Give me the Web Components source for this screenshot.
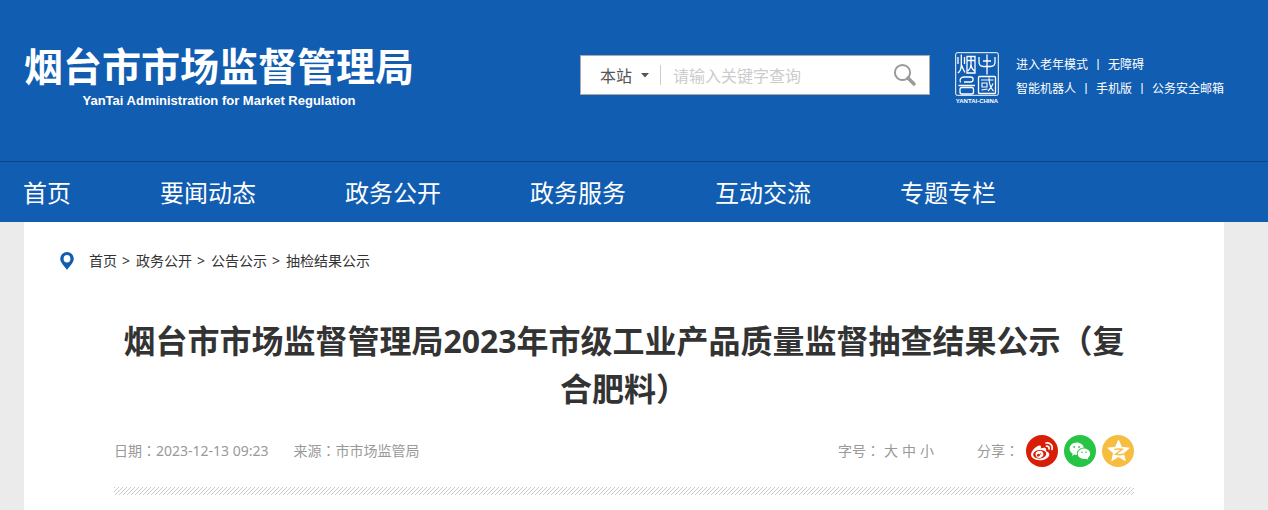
<!DOCTYPE html>
<html lang="zh-CN">
<head>
<meta charset="utf-8">
<meta name="viewport" content="width=device-width, initial-scale=1">
<title>烟台市市场监督管理局</title>
<style>
:root{--brand:#115db1;--brand-line:#0b4689;--muted:#999;--side-l:24px;--side-r:44px}
body{margin:0;background:#ebebeb;color:#333;font-family:"Noto Sans","Noto Sans CJK SC",sans-serif;font-size:14px}
.p{font-family:"Noto Sans CJK TC",sans-serif;line-height:1}
</style>
</head>
<body>
<site-header>
  <site-logo slot="logo"></site-logo>
  <site-search slot="search"></site-search>
  <city-seal slot="seal"></city-seal>
  <quick-links slot="links"></quick-links>
</site-header>
<site-nav>
  <nav-item href="#home">首页</nav-item>
  <nav-item href="#news">要闻动态</nav-item>
  <nav-item href="#open">政务公开</nav-item>
  <nav-item href="#service">政务服务</nav-item>
  <nav-item href="#interact">互动交流</nav-item>
  <nav-item href="#topics">专题专栏</nav-item>
</site-nav>
<article-page>
  <bread-crumbs slot="crumbs"></bread-crumbs>
  <span slot="title">烟台市市场监督管理局2023年市级工业产品质量监督抽查结果公示（复合肥料）</span>
  <article-meta slot="meta">
    <span slot="date">日期<span class="p" lang="zh-TW">：</span>2023-12-13 09:23</span>
    <span slot="source">来源<span class="p" lang="zh-TW">：</span>市市场监管局</span>
  </article-meta>
</article-page>

<script>
function define(name, markup) {
  const template = document.createElement('template');
  template.innerHTML = markup;
  customElements.define(name, class extends HTMLElement {
    constructor() {
      super();
      this.attachShadow({ mode: 'open' }).append(template.content.cloneNode(true));
    }
    connectedCallback() {
      const link = this.shadowRoot.querySelector('a.self');
      if (link) link.setAttribute('href', this.getAttribute('href') || '#');
    }
  });
}

define('site-header', `
<style>
:host{display:block;background:var(--brand);color:#fff;border-bottom:1px solid var(--brand-line)}
header{display:flex;align-items:flex-start;padding:36px var(--side-r) 52px var(--side-l)}
.logo{flex:1}
.search{width:350px;padding-top:19px}
.seal{margin:16px 17px 0 25px}
.links{width:208px;padding-top:16px}
</style>
<header>
  <div class="logo"><slot name="logo"></slot></div>
  <div class="search"><slot name="search"></slot></div>
  <div class="seal"><slot name="seal"></slot></div>
  <div class="links"><slot name="links"></slot></div>
</header>`);

define('site-logo', `
<style>
:host{display:block}
a{display:inline-block;color:#fff;text-decoration:none;text-align:center}
strong{display:block;font:bold 39px/56px "Noto Sans CJK SC",sans-serif}
small{display:block;font:bold 13px/17px "Liberation Sans",sans-serif}
</style>
<a href="#home"><strong>烟台市市场监督管理局</strong><small>YanTai Administration for Market Regulation</small></a>`);

define('site-search', `
<style>
:host{display:block}
form{display:flex;align-items:center;box-sizing:border-box;height:40px;margin:0;background:#fff;border:1px solid #aaa}
.scope{position:relative;width:80px;height:20px;box-sizing:border-box;border-right:1px solid #ccc;display:flex;align-items:center}
select{appearance:none;border:0;background:none;width:100%;height:38px;padding:0 0 0 19px;font:16px "Noto Sans CJK SC",sans-serif;color:#555;outline:0}
.scope svg{position:absolute;right:11px;top:8px;pointer-events:none}
input{flex:1;min-width:0;border:0;outline:0;background:none;padding:0 12px;height:38px;font:16px "Noto Sans CJK SC",sans-serif;color:#555}
input::placeholder{color:#ccc;opacity:1}
button{border:0;background:none;padding:0;margin-right:12px;width:24px;height:24px;cursor:pointer}
svg{display:block}
</style>
<form role="search">
  <div class="scope"><select aria-label="搜索范围"><option>本站</option></select>
  <svg width="8" height="5" viewBox="0 0 8 5"><path d="M0 0h8L4 4.5z" fill="#555"/></svg></div>
  <input type="text" aria-label="关键字" placeholder="请输入关键字查询">
  <button type="button" aria-label="搜索"><svg width="24" height="24" viewBox="0 0 24 24" fill="none" stroke="#999"><circle cx="9.5" cy="9.5" r="7.6" stroke-width="2"/><path d="M15 15l6 6" stroke-width="3.4" stroke-linecap="round"/></svg></button>
</form>`);

define('city-seal', `
<style>
:host{display:block;width:44px;color:#fff}
svg{display:block}
</style>
<svg width="44" height="51" viewBox="0 0 44 51" fill="none" stroke="#fff" stroke-width="1.3" role="img" aria-label="中国烟台">
  <rect x=".7" y=".7" width="42.6" height="42.6" rx="1.5" stroke-width="1"/>
  <path d="M3 5v7M9.500 5v7M6.300 2.500v10c0 4-1 7-3.500 8.500M6.500 13c1 3 2 5 3.500 7.500"/>
  <path d="M12 4.500h8v16.500h-8zM12.500 8.500h7.500M16 5v7c0 3-1 5-3 7M16 12c0 3 1 5 3.500 7"/>
  <path d="M32 2.500v20M24 5v5c0 3 2 4.500 4.500 4.500h7c2.500 0 4.500-1.500 4.500-4.500V5M28 9h8"/>
  <path d="M3.500 33.500h16.500M5.500 30.500c-1.500-3 .5-5.500 3.500-5.500h6.500c3.500 0 3.500 5 0 5H9M5 37c0-1 1-1.500 2-1.500h9.500c1 0 2 .5 2 1.500v3c0 1-1 2-2 2H7c-1 0-2-1-2-2z"/>
  <rect x="23.500" y="24.500" width="17" height="17" rx="1"/>
  <path d="M26 28h12.500M27 31h5v4h-5zM26.500 38l6-1M34 25.500c0 6 1 10 4.500 13.500M38 31.500c-1 3-2.500 5.500-5 7.500" stroke-width="1.100"/>
  <text x="22" y="50.500" text-anchor="middle" font-family="Liberation Sans" font-weight="bold" font-size="6" fill="#fff" stroke="none">YANTAI-CHINA</text>
</svg>`);

define('quick-links', `
<style>
:host{display:block;font:12px/24px "Noto Sans CJK SC",sans-serif}
div{display:flex;gap:4px;white-space:nowrap}
a{color:#fff;text-decoration:none}
</style>
<div><a href="#elder">进入老年模式</a><span>丨</span><a href="#access">无障碍</a></div>
<div><a href="#robot">智能机器人</a><span>丨</span><a href="#mobile">手机版</a><span>丨</span><a href="#mail">公务安全邮箱</a></div>`);

define('site-nav', `
<style>
:host{display:block;background:var(--brand)}
nav{display:flex;gap:89px;padding:0 var(--side-r) 0 23px}
</style>
<nav><slot></slot></nav>`);

define('nav-item', `
<style>
:host{display:block;font:24px/60px "Noto Sans CJK SC",sans-serif;white-space:nowrap}
a{color:#fff;text-decoration:none}
</style>
<a class="self"><slot></slot></a>`);

define('bread-crumbs', `
<style>
:host{display:block;font-size:14px;line-height:20px}
nav{display:flex;align-items:center;gap:5px}
svg{margin-right:10px}
span{padding:0 1px 0 0}
a{color:#333;text-decoration:none}
</style>
<nav aria-label="当前位置">
  <svg width="14" height="18" viewBox="0 0 14 18"><path fill="#115db1" fill-rule="evenodd" d="M7 0a6.800 6.800 0 0 1 6.800 6.800C13.800 10.500 9.500 14.500 7 18 4.500 14.500.2 10.500.2 6.800A6.800 6.800 0 0 1 7 0zm0 3a3.400 3.800 0 1 0 0 7.600A3.400 3.800 0 0 0 7 3z"/></svg>
  <a href="#home">首页</a><span>&gt;</span><a href="#open">政务公开</a><span>&gt;</span><a href="#notice">公告公示</a><span>&gt;</span><a href="#result">抽检结果公示</a>
</nav>`);

define('article-page', `
<style>
:host{display:block;margin:0 var(--side-r) 0 var(--side-l);background:#fff;min-height:calc(100vh - 222px)}
.crumbs{padding:29px 36px 0}
article{padding:46px 90px 0}
h1{margin:0;font-size:32px;line-height:48px;font-weight:bold;text-align:center;color:#333}
.meta{padding-top:22px}
.hatch{height:8px;margin-top:20px;background:linear-gradient(135deg,#ccc 12.5%,#fff 12.5% 50%,#ccc 50% 62.5%,#fff 62.5%) 0 0/4px 4px}
</style>
<div class="crumbs"><slot name="crumbs"></slot></div>
<article>
  <h1><slot name="title"></slot></h1>
  <div class="meta"><slot name="meta"></slot></div>
  <div class="hatch"></div>
</article>`);

define('article-meta', `
<style>
:host{display:flex;align-items:center;color:var(--muted);font-size:14px;line-height:20px}
.info{display:flex;gap:25px;flex:1}
.size{display:flex;gap:4px;margin-right:43px}
.p{font-family:"Noto Sans CJK TC",sans-serif;line-height:1}
button{border:0;background:none;padding:0;font:inherit;color:inherit;cursor:pointer}
.share{display:flex;align-items:center;gap:6px}
.label{margin-right:1px}
</style>
<div class="info"><slot name="date"></slot><slot name="source"></slot></div>
<div class="size"><span>字号<span class="p" lang="zh-TW">：</span></span><button type="button">大</button><button type="button">中</button><button type="button">小</button></div>
<div class="share"><span class="label">分享<span class="p" lang="zh-TW">：</span></span><share-weibo></share-weibo><share-wechat></share-wechat><share-qzone></share-qzone></div>`);

const shareStyle = `<style>:host{display:block}a,svg{display:block}</style>`;

define('share-weibo', shareStyle + `
<a href="#weibo" aria-label="微博"><svg width="32" height="32" viewBox="0 0 32 32">
  <circle cx="16" cy="16" r="16" fill="#d81e06"/>
  <path fill="#fff" d="M13.800 10.500c1.500.1 1.400 1.500.9 2.900 2.500-1 5.700-1.200 5.500 1.600 0 .6-.3 1-.2 1.200 1.700.4 3.500 1.500 3.300 3.500-.4 3.500-5 5.500-9.600 5.500-4.800 0-8.700-2.200-8.700-5.600 0-3.500 5.600-9.400 8.800-9.100z"/>
  <ellipse cx="13.700" cy="19.300" rx="6.600" ry="4.300" fill="#d81e06" transform="rotate(-6 13.700 19.300)"/>
  <ellipse cx="13.500" cy="19.400" rx="3.900" ry="3.500" fill="#fff" transform="rotate(-20 13.500 19.400)"/>
  <ellipse cx="12.400" cy="20.200" rx="1.600" ry="1.300" fill="#d81e06" transform="rotate(-20 12.400 20.200)"/>
  <circle cx="14.700" cy="18.900" r=".6" fill="#d81e06"/>
  <path fill="none" stroke="#fff" stroke-width="1.700" stroke-linecap="round" d="M20 8c4-.7 7.200 2.500 6 6.500M20.500 11.200c1.800-.3 3 1 2.500 2.700"/>
</svg></a>`);

define('share-wechat', shareStyle + `
<a href="#wechat" aria-label="微信"><svg width="32" height="32" viewBox="0 0 32 32">
  <circle cx="16" cy="16" r="16" fill="#28c445"/>
  <path fill="#fff" d="M12.700 7.500c3.700 0 6.700 2.300 7.200 5.300-4 0-7 2.500-7 5.700 0 .5.1 1 .2 1.500-.9 0-1.800-.1-2.700-.4L8 21l.7-2.300c-1.900-1.200-3.100-2.800-3.100-4.900 0-3.500 3.200-6.300 7.100-6.300z"/>
  <path fill="#fff" d="M20 13.600c3.400 0 6.200 2.300 6.200 5.200 0 1.700-1 3.100-2.400 4.100l.5 1.900-2.100-1.100c-.7.2-1.400.3-2.200.3-3.500 0-6.200-2.300-6.200-5.200s2.800-5.200 6.200-5.200z"/>
  <g fill="#28c445"><circle cx="10.200" cy="11.900" r=".95"/><circle cx="15" cy="11.900" r=".95"/><circle cx="18" cy="17.200" r=".8"/><circle cx="22" cy="17.200" r=".8"/></g>
</svg></a>`);

define('share-qzone', shareStyle + `
<a href="#qzone" aria-label="QQ空间"><svg width="32" height="32" viewBox="0 0 32 32">
  <circle cx="16" cy="16" r="16" fill="#f6bd41"/>
  <path fill="#fff" stroke="#fff" stroke-linejoin="round" d="M16.500 5.300l3.100 7.100 7.600.7-5.800 5 1.800 7.500-6.700-4-6.700 4 1.800-7.500-5.800-5 7.600-.7z"/>
  <path fill="none" stroke="#f6bd41" stroke-width="1.400" d="M12.300 14.400c3-.5 5.500-.5 8-.1l-6.800 5.100c2.500.4 5.500.4 8.500-.1"/>
</svg></a>`);
</script>
</body>
</html>
